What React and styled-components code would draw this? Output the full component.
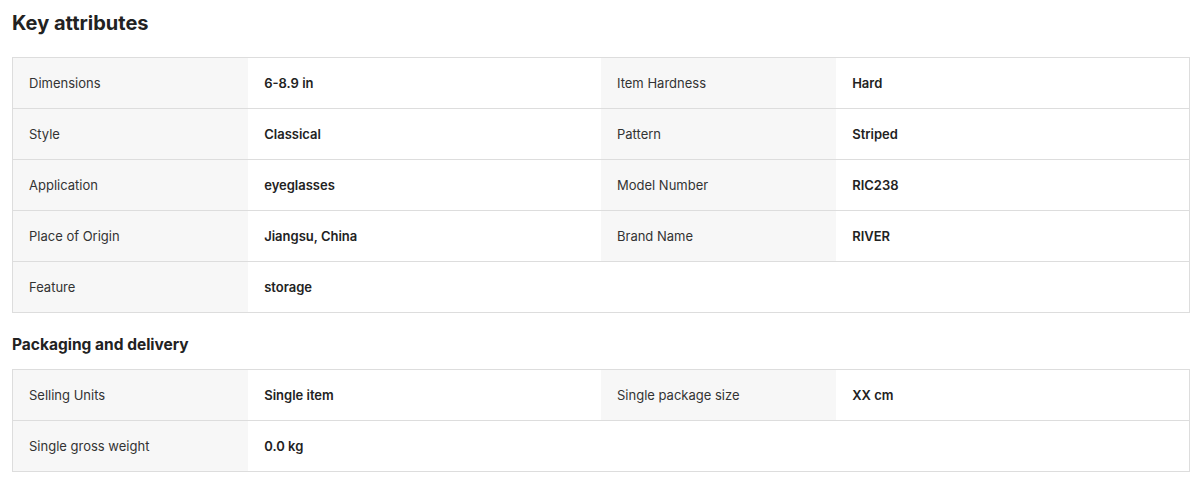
import React from 'react';
import styled, { createGlobalStyle } from 'styled-components';

const GlobalStyle = createGlobalStyle`
  body {
    margin: 0;
    background: #ffffff;
    font-family: Inter, "Open Sans", sans-serif;
    color: #222222;
  }
`;

const Page = styled.div`
  padding: 9px 7px 10px 12px;
  display: flex;
  flex-direction: column;
`;

const Title = styled.h2`
  margin: 0 0 20px;
  font-size: 20px;
  line-height: 28px;
  font-weight: 700;
  color: #222222;
`;

const SubTitle = styled.h3`
  margin: 21px 0 13px;
  font-size: 15.5px;
  line-height: 22px;
  font-weight: 700;
  color: #222222;
`;

const Table = styled.div`
  display: grid;
  grid-template-columns: 20% 30% 20% 30%;
  border: 1px solid #dddddd;
  border-bottom: none;
`;

const Cell = styled.div`
  height: 50px;
  display: flex;
  align-items: center;
  padding: 0 16px;
  font-size: 13px;
  border-bottom: 1px solid #dddddd;
  background: ${(p) => (p.$label ? '#f7f7f7' : '#ffffff')};
  color: ${(p) => (p.$label ? '#333333' : '#222222')};
  font-weight: ${(p) => (p.$label ? 400 : 600)};
  white-space: nowrap;
`;

const keyAttributes = [
  ['Dimensions', '6-8.9 in', 'Item Hardness', 'Hard'],
  ['Style', 'Classical', 'Pattern', 'Striped'],
  ['Application', 'eyeglasses', 'Model Number', 'RIC238'],
  ['Place of Origin', 'Jiangsu, China', 'Brand Name', 'RIVER'],
  ['Feature', 'storage'],
];

const packaging = [
  ['Selling Units', 'Single item', 'Single package size', 'XX cm'],
  ['Single gross weight', '0.0 kg'],
];

function AttrTable({ rows }) {
  return (
    <Table>
      {rows.map((row, i) => (
        <React.Fragment key={i}>
          <Cell $label>{row[0]}</Cell>
          <Cell>{row[1]}</Cell>
          {row[2] ? <Cell $label>{row[2]}</Cell> : <Cell />}
          <Cell>{row[3] || ''}</Cell>
        </React.Fragment>
      ))}
    </Table>
  );
}

export default function App() {
  return (
    <Page>
      <GlobalStyle />
      <Title>Key attributes</Title>
      <AttrTable rows={keyAttributes} />
      <SubTitle>Packaging and delivery</SubTitle>
      <AttrTable rows={packaging} />
    </Page>
  );
}
